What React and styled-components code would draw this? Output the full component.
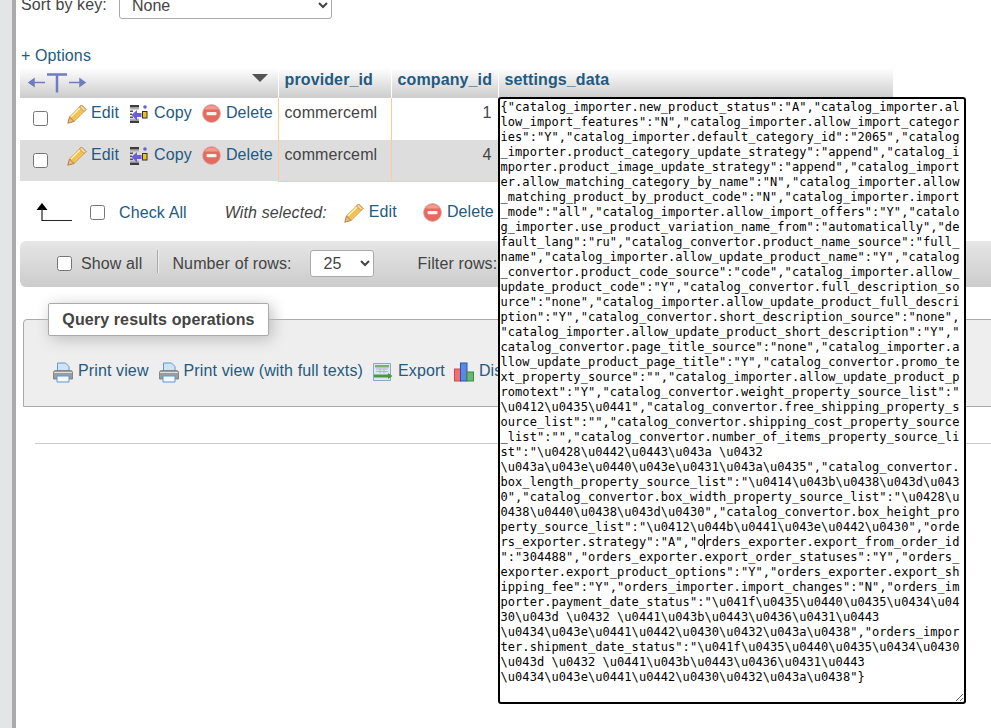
import React from 'react';
import styled, { createGlobalStyle } from 'styled-components';

const GlobalStyle = createGlobalStyle`
  html, body {
    margin: 0;
    height: 100%;
    overflow: hidden;
    background: #fff;
    font-family: "Liberation Sans", Arial, sans-serif;
    font-size: 16px;
    letter-spacing: 0.12px;
    color: #444;
  }
`;

const settingsText = String.raw`{"catalog_importer.new_product_status":"A","catalog_importer.allow_import_features":"N","catalog_importer.allow_import_categories":"Y","catalog_importer.default_category_id":"2065","catalog_importer.product_category_update_strategy":"append","catalog_importer.product_image_update_strategy":"append","catalog_importer.allow_matching_category_by_name":"N","catalog_importer.allow_matching_product_by_product_code":"N","catalog_importer.import_mode":"all","catalog_importer.allow_import_offers":"Y","catalog_importer.use_product_variation_name_from":"automatically","default_lang":"ru","catalog_convertor.product_name_source":"full_name","catalog_importer.allow_update_product_name":"Y","catalog_convertor.product_code_source":"code","catalog_importer.allow_update_product_code":"Y","catalog_convertor.full_description_source":"none","catalog_importer.allow_update_product_full_description":"Y","catalog_convertor.short_description_source":"none","catalog_importer.allow_update_product_short_description":"Y","catalog_convertor.page_title_source":"none","catalog_importer.allow_update_product_page_title":"Y","catalog_convertor.promo_text_property_source":"","catalog_importer.allow_update_product_promotext":"Y","catalog_convertor.weight_property_source_list":"\u0412\u0435\u0441","catalog_convertor.free_shipping_property_source_list":"","catalog_convertor.shipping_cost_property_source_list":"","catalog_convertor.number_of_items_property_source_list":"\u0428\u0442\u0443\u043a \u0432 \u043a\u043e\u0440\u043e\u0431\u043a\u0435","catalog_convertor.box_length_property_source_list":"\u0414\u043b\u0438\u043d\u0430","catalog_convertor.box_width_property_source_list":"\u0428\u0438\u0440\u0438\u043d\u0430","catalog_convertor.box_height_property_source_list":"\u0412\u044b\u0441\u043e\u0442\u0430","orders_exporter.strategy":"A","orders_exporter.export_from_order_id":"304488","orders_exporter.export_order_statuses":"Y","orders_exporter.export_product_options":"Y","orders_exporter.export_shipping_fee":"Y","orders_importer.import_changes":"N","orders_importer.payment_date_status":"\u041f\u0435\u0440\u0435\u0434\u0430\u043d \u0432 \u0441\u043b\u0443\u0436\u0431\u0443 \u0434\u043e\u0441\u0442\u0430\u0432\u043a\u0438","orders_importer.shipment_date_status":"\u041f\u0435\u0440\u0435\u0434\u0430\u043d \u0432 \u0441\u043b\u0443\u0436\u0431\u0443 \u0434\u043e\u0441\u0442\u0430\u0432\u043a\u0438"}`;

const Page = styled.div`
  display: flex;
  height: 728px;
  overflow: hidden;
`;

const Sidebar = styled.div`
  flex: 0 0 12px;
  background: #e3e6e6;
  border-right: 4px solid #aaa;
`;

const Main = styled.div`
  flex: 1;
  min-width: 0;
  margin-top: -9px;
  padding-left: 4px;
  overflow: hidden;
`;

const SortRow = styled.div`
  display: flex;
  align-items: center;
  gap: 12px;
  height: 28px;
  padding-left: 1px;
`;

const Select = styled.select`
  width: ${props => props.$width}px;
  height: ${props => props.$height}px;
  margin: ${props => props.$margin || '0'};
  padding: 0 ${props => props.$pad || 8}px;
  background: #fff;
  border: 1px solid #aaa;
  border-radius: 3px;
  color: #444;
  font: 16px "Liberation Sans", Arial, sans-serif;
`;

const Link = styled.a`
  color: #235a81;
  text-decoration: none;
  white-space: nowrap;
`;

const OptionsRow = styled.div`
  margin-top: 28px;
  padding-left: 1px;
  line-height: 18px;
  height: 21px;
`;

const Table = styled.table`
  table-layout: fixed;
  width: 873px;
  border-collapse: collapse;
  border-spacing: 0;
`;

const HeadCell = styled.th`
  position: relative;
  height: 30px;
  padding: 0 6px;
  border-left: ${props => (props.$first ? 'none' : '1px solid #fff')};
  background: linear-gradient(#fff, #ccc);
  color: #235a81;
  font-size: 16px;
  font-weight: bold;
  text-align: left;
  vertical-align: top;
  line-height: 24px;
  white-space: nowrap;
`;

const SortArrow = styled.span`
  position: absolute;
  top: 6px;
  right: 10px;
  width: 0;
  height: 0;
  border-left: 8px solid transparent;
  border-right: 8px solid transparent;
  border-top: 8px solid #555;
`;

const Row = styled.tr`
  background: ${props => (props.$alt ? '#ddd' : '#fff')};
`;

const Cell = styled.td`
  position: relative;
  height: ${props => props.$height}px;
  padding: 6px;
  border-left: 1px solid #fc9;
  border-bottom: ${props => (props.$last ? '1px solid #fc9' : 'none')};
  box-sizing: border-box;
  text-align: ${props => (props.$num ? 'right' : 'left')};
  vertical-align: top;
  line-height: 18px;
`;

const ActionCell = styled.td`
  padding: 0 0 0 13px;
  vertical-align: top;
`;

const Actions = styled.div`
  display: flex;
  align-items: flex-start;
  height: 100%;
  padding-top: 6px;
`;

const Check = styled.input.attrs({ type: 'checkbox' })`
  flex: none;
  width: 15px;
  height: 15px;
  margin: ${props => props.$margin || '0'};
  accent-color: #444;
`;

const IconLink = styled(Link)`
  display: inline-flex;
  align-items: flex-start;
  gap: ${props => props.$gap || 5}px;
  margin-right: ${props => props.$after || 0}px;
  line-height: 18px;
`;

const SettingsArea = styled.textarea`
  position: absolute;
  z-index: 5;
  top: -1px;
  left: -1px;
  box-sizing: border-box;
  width: 468px;
  height: 607px;
  margin: 0;
  padding: 1px;
  background: #fff;
  border: 2px solid #000;
  border-radius: 3px;
  outline: none;
  color: #000;
  font-family: "DejaVu Sans Mono", monospace;
  font-size: 12px;
  letter-spacing: 0.06px;
  line-height: 15px;
  overflow: hidden;
`;

const Caret = styled.span`
  position: absolute;
  z-index: 6;
  top: 436px;
  left: 205px;
  width: 1px;
  height: 15px;
  background: #000;
`;

const Toolbar = styled.div`
  display: flex;
  align-items: center;
  height: 42px;
  margin-top: 10px;
  padding-left: 16px;
  white-space: nowrap;
`;

const Selected = styled.em`
  margin: 0 17px 0 38px;
`;

const NavBar = styled.div`
  display: flex;
  align-items: center;
  width: 1100px;
  height: 46px;
  margin-top: 7px;
  padding-left: 37px;
  box-sizing: border-box;
  background: linear-gradient(#e6e6e6, #ccc);
  border-radius: 6px 0 0 6px;
  white-space: nowrap;
`;

const Divider = styled.span`
  width: 1px;
  height: 23px;
  margin: -4px 13px 0 15px;
  background: #aaa;
  border-right: 1px solid #eee;
`;

const Fieldset = styled.div`
  position: relative;
  box-sizing: border-box;
  width: 1100px;
  height: 88px;
  margin: 32px 0 0 3px;
  background: #eee;
  border: 1px solid #aaa;
  border-radius: 4px 0 0 0;
`;

const Legend = styled.div`
  position: absolute;
  top: -17px;
  left: 24px;
  box-sizing: border-box;
  width: 221px;
  height: 33px;
  background: #fff;
  border: 1px solid #aaa;
  border-radius: 2px;
  box-shadow: 3px 3px 15px #bbb;
  color: #444;
  font-weight: bold;
  line-height: 31px;
  text-align: center;
`;

const FieldLinks = styled.div`
  display: flex;
  padding: 42px 0 0 29px;
  white-space: nowrap;
`;

const Rule = styled.div`
  height: 1px;
  margin: 36px 0 0 15px;
  background: #ccc;
`;

const Pencil = () => (
  <svg width="20" height="20" viewBox="0 0 20 20" style={{ flex: 'none' }}>
    <path d="M14.500 1L19 5.500 7 17.500 2.500 13z" fill="#f7d56c" stroke="#c8934a" strokeWidth="1" />
    <path d="M13.500 3.500l3 3L6 17 3.500 14z" fill="#f2c04c" />
    <path d="M13 4L4 13" stroke="#fff3c0" strokeWidth="1.500" />
    <path d="M14.500 1L19 5.500 17 7.500 12.500 3z" fill="#f0dcb0" stroke="#c8934a" strokeWidth="1" />
    <path d="M2.500 13L7 17.500 .8 19.200z" fill="#e8bc8c" stroke="#b8803c" strokeWidth="1" />
  </svg>
);

const CopyIcon = () => (
  <svg width="19" height="20" viewBox="0 0 19 20" style={{ flex: 'none' }}>
    <path d="M1 1h9v2.500H1zM1 16.500h9V19H1z" fill="#3c3c3c" />
    <path d="M1 4h9v1.500H1zM1 14.500h9V16H1z" fill="#b0b0b0" />
    <path d="M1 6.500h3V8H1zM1 9.500h2V11H1zM1 12.500h3V14H1z" fill="#555" />
    <path d="M2.500 11L8 6v3h4.500v4H8v3.500z" fill="#6a5fd8" />
    <rect x="13.500" y="7.500" width="4.500" height="6.500" fill="#f2c21c" stroke="#333" strokeWidth="1" />
    <circle cx="16" cy="3" r="1.800" fill="#6a5fd8" />
  </svg>
);

const DeleteIcon = () => (
  <svg width="19" height="19" viewBox="0 0 19 19" style={{ flex: 'none' }}>
    <circle cx="9.500" cy="9.500" r="9" fill="#e56a5f" stroke="#e0b0a8" strokeWidth="0.8" />
    <path d="M9.500 1.500a8 8 0 0 1 7 4H2.500a8 8 0 0 1 7-4z" fill="#f09a90" />
    <rect x="4.500" y="8" width="10" height="3.200" rx="1" fill="#fdf2f0" />
  </svg>
);

const PrintIcon = () => (
  <svg width="20" height="21" viewBox="0 0 20 21" style={{ flex: 'none' }}>
    <path d="M4.500 1h8l3.500 3.500V11H4.500z" fill="#cfe2f6" stroke="#5a9ad8" strokeWidth="1" />
    <path d="M.5 10.500q0-2 2-2h15q2 0 2 2V17H.5z" fill="#9a9c9e" stroke="#777" strokeWidth="0.8" />
    <path d="M1 10.500h18" stroke="#ddd" strokeWidth="1" />
    <path d="M4 14h12v6H4z" fill="#f4f6f8" stroke="#5a9ad8" strokeWidth="1" />
  </svg>
);

const ExportIcon = () => (
  <svg width="20" height="20" viewBox="0 0 20 20" style={{ flex: 'none' }}>
    <path d="M.5 1.500h17v17H.5z" fill="#dfe8f2" stroke="#88a8cc" strokeWidth="1" />
    <path d="M2 3h14v2.500H2z" fill="#7ab070" />
    <path d="M3 7h12M3 9.500h12M7 6.500v5M11 6.500v5" stroke="#aab8c4" strokeWidth="1" />
    <path d="M1 12.500h14V11l4.500 3-4.500 3v-1.500H1z" fill="#4a9a3a" />
  </svg>
);

const ChartIcon = () => (
  <svg width="20" height="20" viewBox="0 0 20 20" style={{ flex: 'none' }}>
    <rect x="0.500" y="7" width="6" height="12" fill="#f07070" stroke="#d04848" strokeWidth="1" />
    <rect x="6.500" y="1" width="6.500" height="18" fill="#5a8ae0" stroke="#2a50b8" strokeWidth="1" />
    <rect x="13" y="10" width="6.500" height="9" fill="#6ab870" stroke="#3a8a48" strokeWidth="1" />
  </svg>
);

const ColumnResizeIcon = () => (
  <svg width="60" height="22" viewBox="0 0 60 22" style={{ display: 'block', margin: '4px 0 0 1px' }}>
    <path d="M2 10.500h16M2 10.500l5-3.500v7zM42 10.500h16M58 10.500l-5-3.500v7z" stroke="#6f7cc0" strokeWidth="1.500" fill="#6f7cc0" />
    <path d="M20 2.500h20M30 2.500v18" stroke="#6f7cc0" strokeWidth="2.500" fill="none" />
  </svg>
);

const ArrowLtr = () => (
  <svg width="37" height="20" viewBox="0 0 37 20" style={{ flex: 'none', margin: '-2px 17px 0 0' }}>
    <path d="M6 1l5.500 7H.5z" fill="#000" />
    <path d="M6 6v12.500h30" stroke="#222" strokeWidth="1.200" fill="none" />
  </svg>
);

const Actionset = () => (
  <Actions>
    <Check $margin="7px 19px 0 0" />
    <IconLink href="#" $after={10} $gap={4}><Pencil />Edit</IconLink>
    <IconLink href="#" $after={10} $gap={6}><CopyIcon />Copy</IconLink>
    <IconLink href="#" $gap={5}><DeleteIcon />Delete</IconLink>
  </Actions>
);

const App = () => (
  <Page>
    <GlobalStyle />
    <Sidebar />
    <Main>
      <SortRow>
        Sort by key:
        <Select $width={213} $height={28}><option>None</option></Select>
      </SortRow>
      <OptionsRow><Link href="#">+ Options</Link></OptionsRow>
      <Table>
        <colgroup>
          <col style={{ width: 258 }} />
          <col style={{ width: 113 }} />
          <col style={{ width: 107 }} />
          <col />
        </colgroup>
        <thead>
          <tr>
            <HeadCell $first><ColumnResizeIcon /><SortArrow /></HeadCell>
            <HeadCell>provider_id</HeadCell>
            <HeadCell>company_id</HeadCell>
            <HeadCell>settings_data</HeadCell>
          </tr>
        </thead>
        <tbody>
          <Row>
            <ActionCell><Actionset /></ActionCell>
            <Cell $height={42}>commerceml</Cell>
            <Cell $height={42} $num>1</Cell>
            <Cell $height={42}>
              <SettingsArea defaultValue={settingsText} spellCheck={false} />
              <Caret />
            </Cell>
          </Row>
          <Row $alt>
            <ActionCell><Actionset /></ActionCell>
            <Cell $height={41} $last>commerceml</Cell>
            <Cell $height={41} $last $num>4</Cell>
            <Cell $height={41} $last />
          </Row>
        </tbody>
      </Table>
      <Toolbar>
        <ArrowLtr />
        <Check $margin="0 14px 0 0" />
        <Link href="#">Check All</Link>
        <Selected>With selected:</Selected>
        <IconLink href="#" $after={26} $gap={5}><Pencil />Edit</IconLink>
        <IconLink href="#" $gap={5}><DeleteIcon />Delete</IconLink>
      </Toolbar>
      <NavBar>
        <Check $margin="0 9px 0 0" />
        Show all
        <Divider />
        Number of rows:
        <Select $width={64} $height={27} $pad={9} $margin="0 44px 0 18px"><option>25</option></Select>
        Filter rows:
      </NavBar>
      <Fieldset>
        <Legend>Query results operations</Legend>
        <FieldLinks>
          <IconLink href="#" $after={10}><PrintIcon />Print view</IconLink>
          <IconLink href="#" $after={10}><PrintIcon />Print view (with full texts)</IconLink>
          <IconLink href="#" $after={9}><ExportIcon />Export</IconLink>
          <IconLink href="#"><ChartIcon />Display chart</IconLink>
        </FieldLinks>
      </Fieldset>
      <Rule />
    </Main>
  </Page>
);

export default App;
